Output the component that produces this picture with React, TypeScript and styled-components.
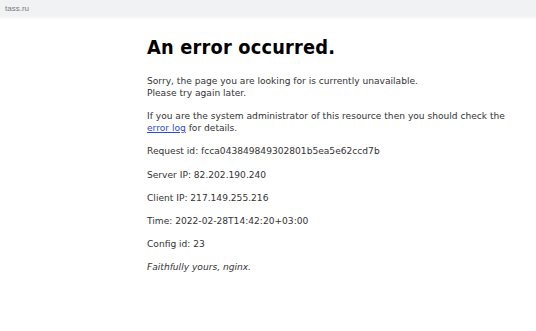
import styled, { createGlobalStyle } from "styled-components";

const GlobalStyle = createGlobalStyle`
  html, body {
    margin: 0;
    padding: 0;
    background: #ffffff;
  }
`;

const AddressBar = styled.header`
  height: 17px;
  background: #f1f2f4;
  border-bottom: 2px solid #f8f9fa;
  display: flex;
  align-items: center;
  padding-left: 5px;
  font-family: "Liberation Sans", Arial, sans-serif;
  font-size: 8px;
  color: #7a7a7a;
`;

const Page = styled.main`
  width: 372px;
  margin: 0 0 0 147px;
  padding-top: 17px;
  font-family: "DejaVu Sans", Tahoma, Verdana, sans-serif;
  font-size: 9.1px;
  line-height: 12px;
  color: #333333;
`;

const Title = styled.h1`
  margin: 0 0 15px;
  font-family: "DejaVu Sans Condensed", "DejaVu Sans", Tahoma, sans-serif;
  font-size: 19.8px;
  line-height: 24px;
  font-weight: bold;
  color: #000000;
  letter-spacing: 0.2px;
`;

const Para = styled.p<{ $italic?: boolean }>`
  margin: 0 0 11.2px;
  font-style: ${(props) => (props.$italic ? "italic" : "normal")};
`;

const LogLink = styled.a`
  color: #2a4bd7;
  text-decoration: underline;
`;

const details = [
  "Request id: fcca043849849302801b5ea5e62ccd7b",
  "Server IP: 82.202.190.240",
  "Client IP: 217.149.255.216",
  "Time: 2022-02-28T14:42:20+03:00",
  "Config id: 23",
];

const App = () => {
  return (
    <>
      <GlobalStyle />
      <AddressBar>tass.ru</AddressBar>
      <Page>
        <Title>An error occurred.</Title>
        <Para>
          Sorry, the page you are looking for is currently unavailable.
          <br />
          Please try again later.
        </Para>
        <Para>
          If you are the system administrator of this resource then you should
          check the <LogLink href="#">error log</LogLink> for details.
        </Para>
        {details.map((line) => (
          <Para key={line}>{line}</Para>
        ))}
        <Para $italic>Faithfully yours, nginx.</Para>
      </Page>
    </>
  );
};

export default App;
